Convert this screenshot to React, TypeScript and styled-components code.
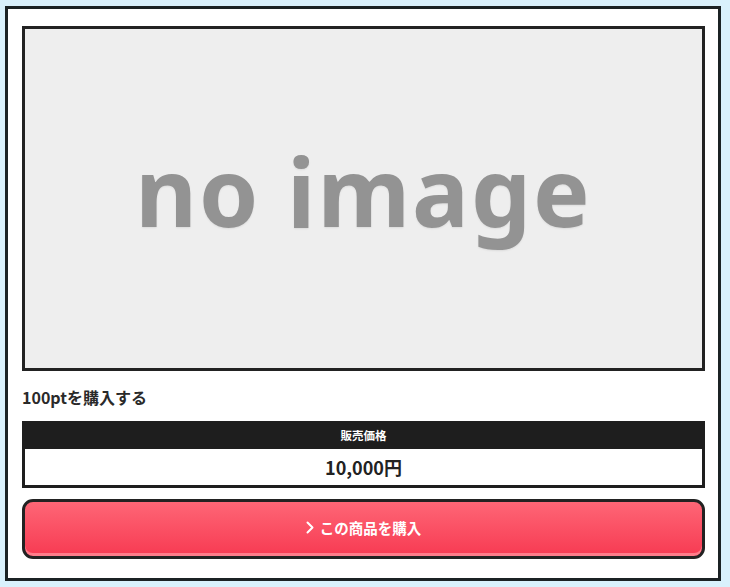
import styled, { createGlobalStyle } from "styled-components";
import React from "react";

const Global = createGlobalStyle`
  html, body {
    margin: 0;
    padding: 0;
    background: #d9f1fc;
    font-family: "Noto Sans", "Noto Sans CJK JP", sans-serif;
  }
`;

const Page = styled.div`
  padding: 6px 9px 7px 5px;
`;

const Card = styled.div`
  border: 3px solid #1b2224;
  background: #fff;
  padding: 17px 13px 19px 14px;
  display: flex;
  flex-direction: column;
`;

const ImageBox = styled.div`
  height: 339px;
  border: 3px solid #222;
  background: #eeeeee;
  display: flex;
  align-items: center;
  justify-content: center;
`;

const NoImage = styled.span`
  font-family: "Noto Sans", sans-serif;
  font-weight: 700;
  font-size: 95px;
  letter-spacing: 2px;
  color: #939393;
  line-height: 1;
  margin-top: -16px;
  text-shadow: 0 1px 2px rgba(0, 0, 0, 0.08);
`;

const Title = styled.div`
  font-family: "Noto Sans CJK JP", sans-serif;
  font-weight: 700;
  font-size: 16px;
  color: #2a2a2a;
  margin: 14px 0 0;
  height: 24px;
  line-height: 24px;
`;

const PriceTable = styled.div`
  margin-top: 12px;
  border: 3px solid #1e1e1e;
  border-top: none;
`;

const PriceHead = styled.div`
  background: #1e1e1e;
  color: #fff;
  font-family: "Noto Sans CJK JP", sans-serif;
  font-weight: 700;
  font-size: 11.5px;
  height: 28px;
  display: flex;
  align-items: center;
  justify-content: center;
`;

const PriceValue = styled.div`
  height: 36px;
  display: flex;
  align-items: center;
  justify-content: center;
  font-family: "Noto Sans CJK JP", sans-serif;
  font-weight: 700;
  font-size: 18px;
  color: #222;
`;

const BuyButton = styled.button`
  margin-top: 11px;
  height: 60px;
  padding-bottom: 4px;
  border: 3px solid #222;
  border-radius: 11px;
  background: linear-gradient(#fe6676, #f73a52);
  box-shadow: inset 0 -3px 0 #ff7c8a;
  color: #fff;
  font-family: "Noto Sans CJK JP", sans-serif;
  font-weight: 700;
  font-size: 14.5px;
  display: flex;
  align-items: center;
  justify-content: center;
  gap: 6px;
  cursor: pointer;
`;

const Chevron = () => (
  <svg width="8" height="13" viewBox="0 0 8 13">
    <path d="M1.5 1.5 L6.5 6.5 L1.5 11.5" fill="none" stroke="#fff" strokeWidth="2" strokeLinecap="round" strokeLinejoin="round" />
  </svg>
);

const App = () => {
  return (
    <>
      <Global />
      <Page>
        <Card>
          <ImageBox>
            <NoImage>no image</NoImage>
          </ImageBox>
          <Title>100ptを購入する</Title>
          <PriceTable>
            <PriceHead>販売価格</PriceHead>
            <PriceValue>10,000円</PriceValue>
          </PriceTable>
          <BuyButton>
            <Chevron />
            この商品を購入
          </BuyButton>
        </Card>
      </Page>
    </>
  );
};

export default App;
